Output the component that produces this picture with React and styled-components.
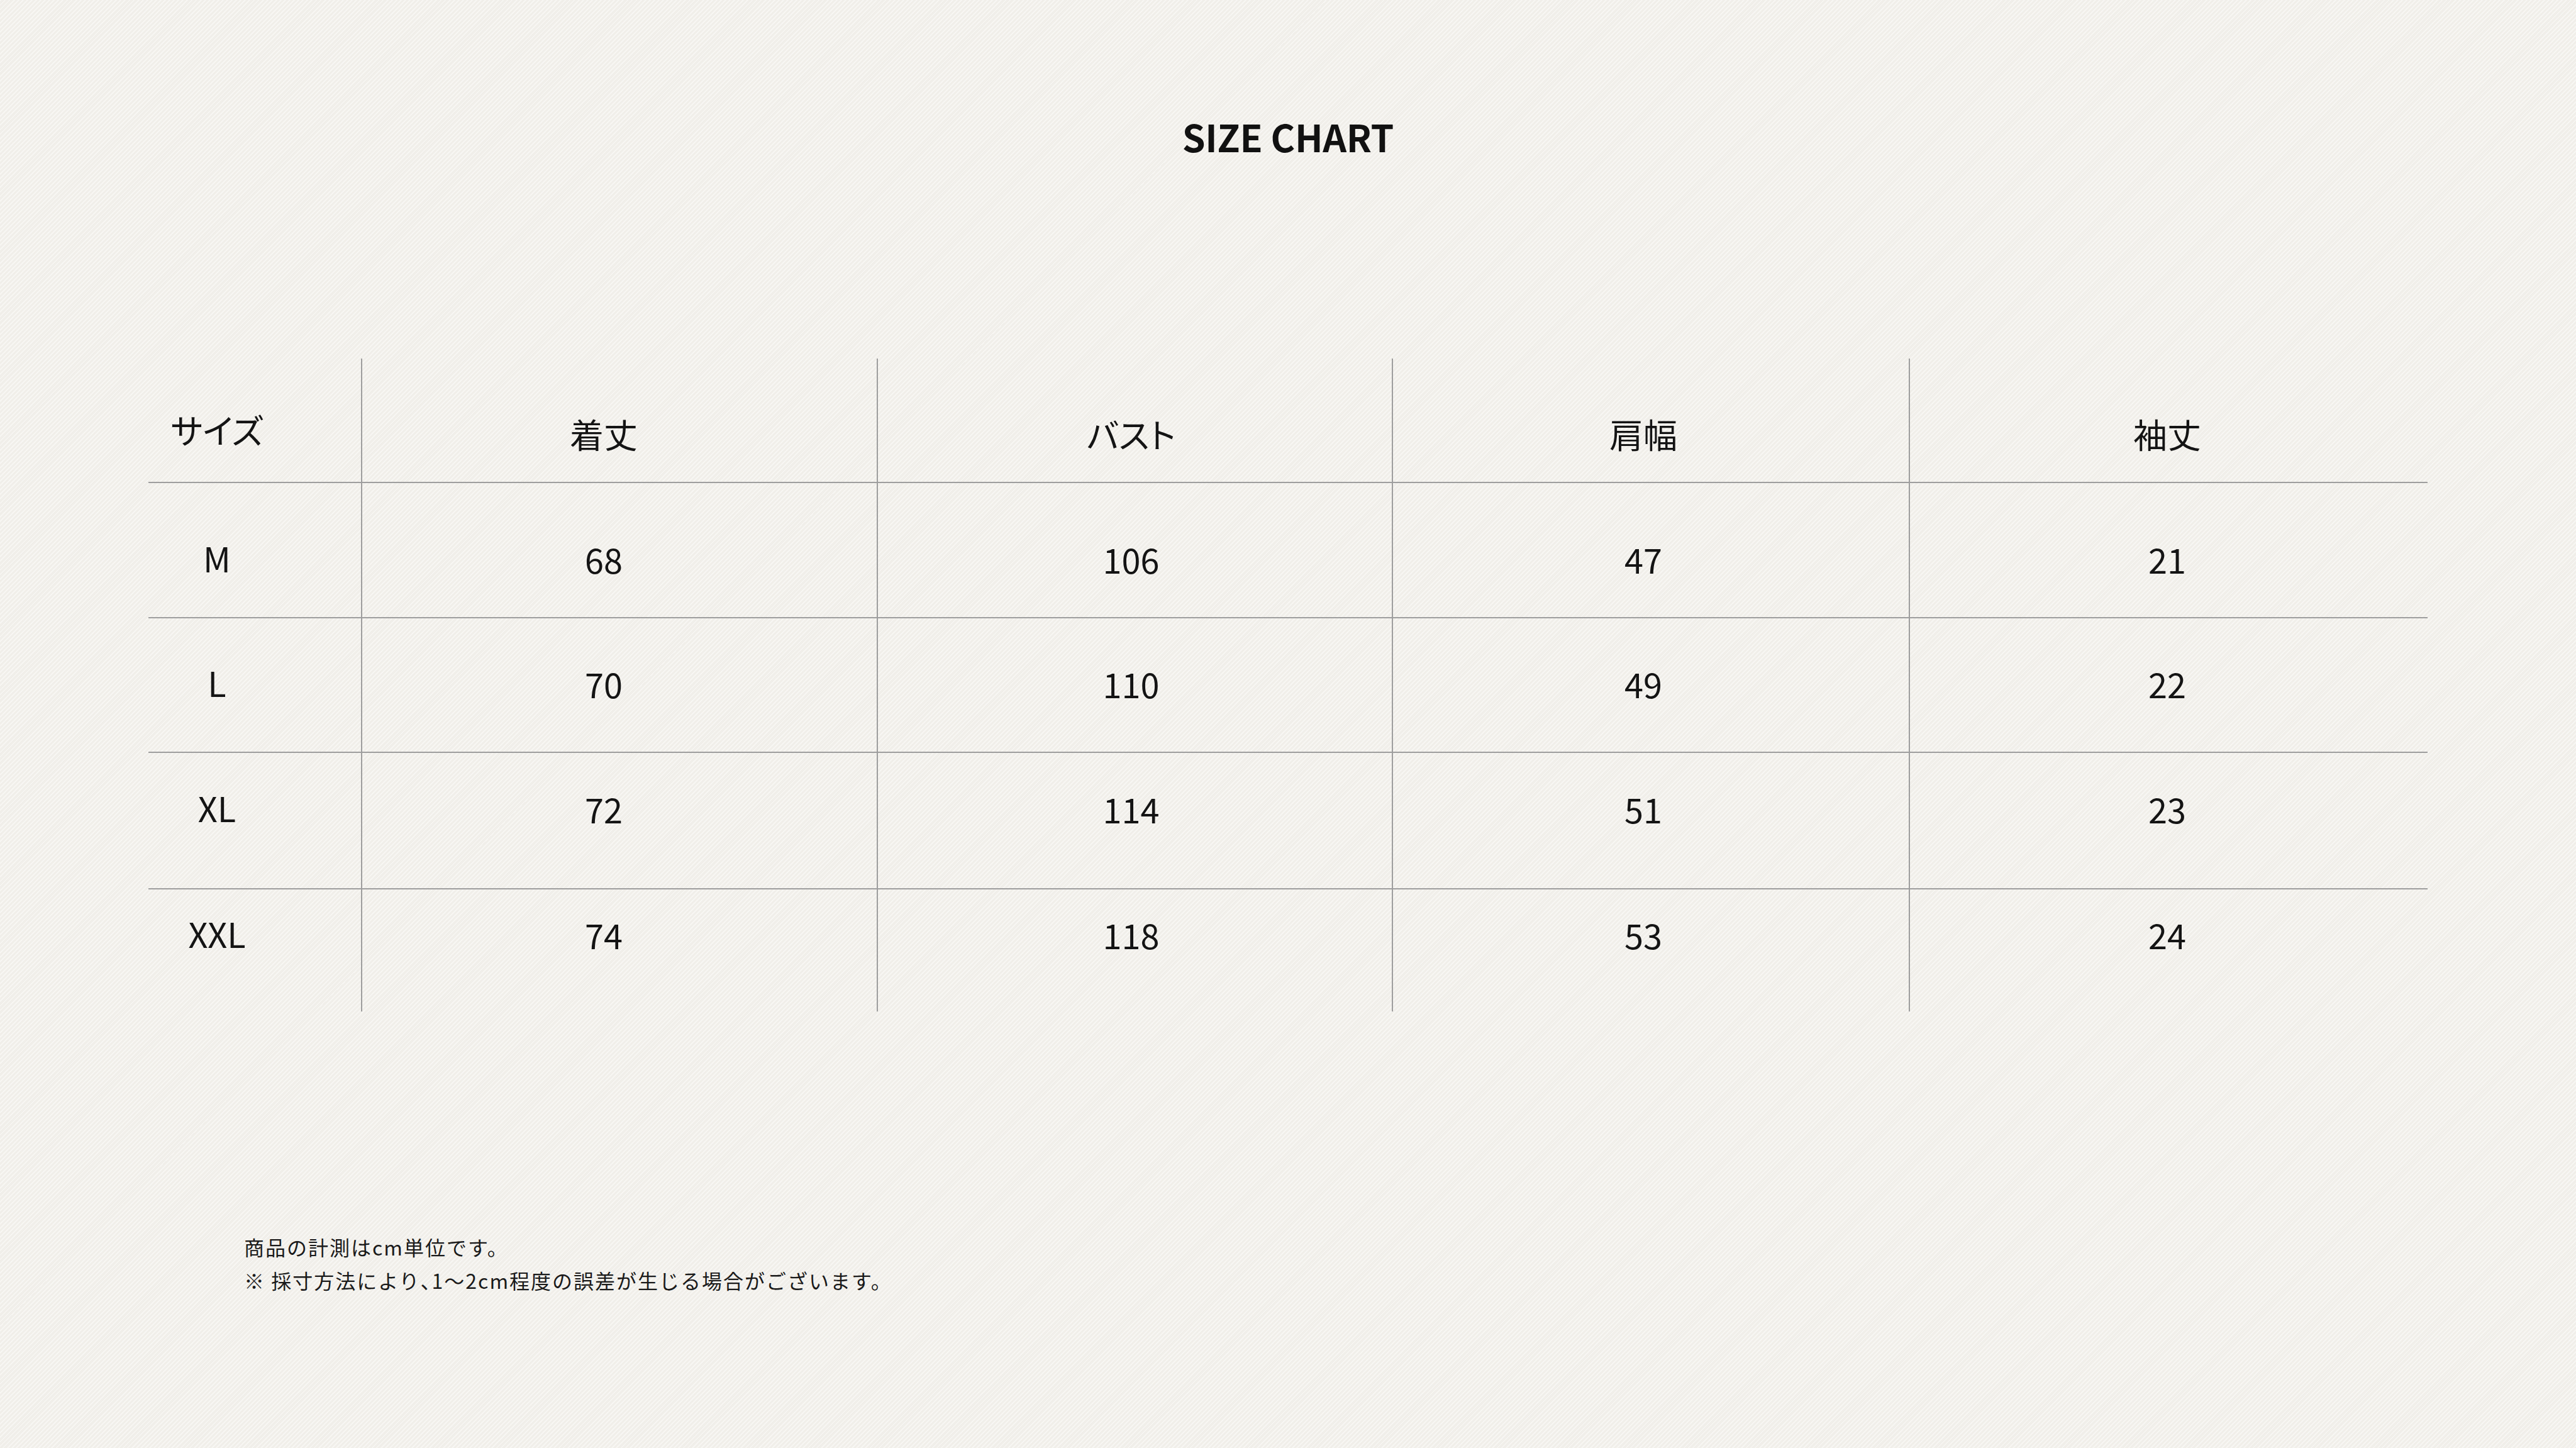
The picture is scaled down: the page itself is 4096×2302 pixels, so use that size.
import React from "react";
import styled, { createGlobalStyle } from "styled-components";

const GlobalStyle = createGlobalStyle`
  html, body {
    margin: 0;
    padding: 0;
    background: #f3f1ec;
  }
  body {
    font-family: "Noto Sans CJK JP", "Noto Sans", sans-serif;
    color: #141414;
  }
`;

const Page = styled.main`
  width: 4096px;
  min-height: 2302px;
  box-sizing: border-box;
  padding-top: 187px;
  display: flex;
  flex-direction: column;
  background-color: #f3f1ec;
  background-image:
    repeating-linear-gradient(
      135deg,
      rgba(255, 255, 255, 0.35) 0px,
      rgba(255, 255, 255, 0.35) 2px,
      rgba(0, 0, 0, 0.012) 2px,
      rgba(0, 0, 0, 0.012) 5px
    );
`;

const Title = styled.h1`
  margin: 0;
  font-family: "Noto Sans CJK JP", "Noto Sans", sans-serif;
  font-size: 59px;
  line-height: 60px;
  font-weight: 700;
  text-align: center;
  color: #111;
  letter-spacing: -0.3px;
`;

const Table = styled.div`
  width: 3624px;
  margin: 323px auto 0;
  display: flex;
  flex-direction: column;
`;

const Row = styled.div`
  display: grid;
  grid-template-columns: 338px 820px 819px 822px 825px;
  height: ${(p) => p.$height}px;
  box-sizing: border-box;
  border-top: ${(p) => (p.$ruled ? "2px solid #9e9e9e" : "none")};
`;

const Cell = styled.div`
  box-sizing: border-box;
  border-left: ${(p) => (p.$first ? "none" : "2px solid #9e9e9e")};
  padding-top: ${(p) => p.$top}px;
  padding-right: ${(p) => p.$right}px;
  text-align: center;
  font-size: 54px;
  line-height: 54px;
  font-weight: 400;
  font-feature-settings: "palt";
  color: #141414;
  white-space: nowrap;
`;

const Notes = styled.div`
  margin-top: 348px;
  padding-left: 388px;
  font-size: 32px;
  line-height: 53px;
  letter-spacing: 2px;
  color: #1a1a1a;
  display: flex;
  flex-direction: column;
`;

const Note = styled.p`
  margin: 0;
  white-space: nowrap;
`;

const Punct = styled.span`
  font-feature-settings: "halt";
`;

const columnRight = [120, 50, 12, 24, 5];

const header = ["サイズ", "着丈", "バスト", "肩幅", "袖丈"];

const rows = [
  { cells: ["M", "68", "106", "47", "21"], height: 215, top: 94 },
  { cells: ["L", "70", "110", "49", "22"], height: 214, top: 77 },
  { cells: ["XL", "72", "114", "51", "23"], height: 217, top: 62 },
  { cells: ["XXL", "74", "118", "53", "24"], height: 196, top: 45 },
];

export default function App() {
  return (
    <>
      <GlobalStyle />
      <Page>
        <Title>SIZE CHART</Title>
        <Table>
          <Row $height={196}>
            {header.map((h, i) => (
              <Cell
                key={h}
                $first={i === 0}
                $top={i === 0 ? 86 : 93}
                $right={columnRight[i]}
              >
                {h}
              </Cell>
            ))}
          </Row>
          {rows.map((r) => (
            <Row key={r.cells[0]} $height={r.height} $ruled>
              {r.cells.map((c, i) => (
                <Cell
                  key={i}
                  $first={i === 0}
                  $top={i === 0 ? r.top - 2 : r.top}
                  $right={columnRight[i]}
                >
                  {c}
                </Cell>
              ))}
            </Row>
          ))}
        </Table>
        <Notes>
          <Note>商品の計測はcm単位です。</Note>
          <Note>
            ※ 採寸方法により<Punct>、</Punct>1〜2cm程度の誤差が生じる場合がございます。
          </Note>
        </Notes>
      </Page>
    </>
  );
}
